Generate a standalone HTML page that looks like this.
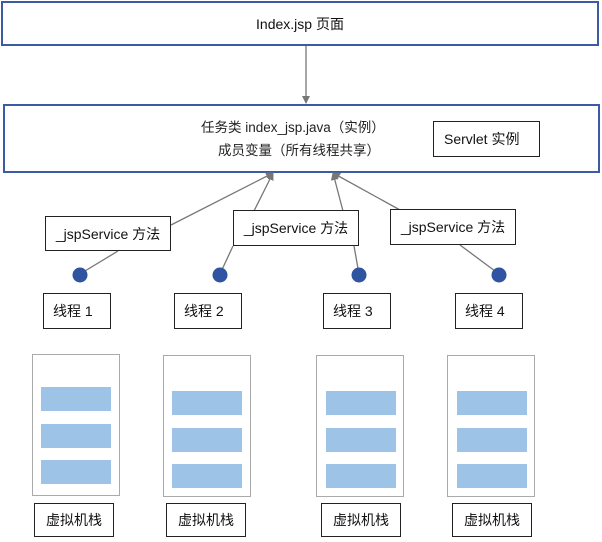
<!DOCTYPE html>
<html><head><meta charset="utf-8"><style>
body{margin:0;width:602px;height:542px;background:#fff;position:relative;overflow:hidden;font-family:"Liberation Sans","Noto Sans CJK SC",sans-serif;font-size:14px;color:#111}
.b{position:absolute;box-sizing:border-box;border:1.5px solid #222;background:#fff;display:flex;align-items:center;justify-content:center}
.l{justify-content:flex-start;padding-left:9px}
.blue{border:2px solid #3d5aa5}
.s{position:absolute;box-sizing:border-box;border:1.5px solid #aaa;background:#fff}
.bar{position:absolute;background:#9dc3e6}
svg{position:absolute;left:0;top:0}
</style></head><body>
<div class="b blue" style="left:1px;top:1px;width:598px;height:45px">Index.jsp 页面</div>
<div class="b blue" style="left:3px;top:104px;width:597px;height:69px"></div>
<div style="position:absolute;left:201px;top:116px;font-size:13.5px;color:#222">任务类 index_jsp.java（实例）</div>
<div style="position:absolute;left:218px;top:139px;font-size:13.5px;color:#222">成员变量（所有线程共享）</div>
<div class="b" style="left:433px;top:121px;width:107px;height:36px;justify-content:flex-start;padding-left:10px">Servlet 实例</div>

<svg width="602" height="542">
<defs><marker id="a" markerWidth="8" markerHeight="8" refX="7" refY="4" orient="auto" markerUnits="userSpaceOnUse"><path d="M0,0L8,4L0,8z" fill="#777"/></marker></defs>
<g stroke="#777" stroke-width="1.3" fill="none">
<line x1="306" y1="46" x2="306" y2="103" marker-end="url(#a)"/>
<line x1="171" y1="225" x2="273" y2="173" marker-end="url(#a)"/>
<line x1="254" y1="211" x2="273" y2="173" marker-end="url(#a)"/>
<line x1="343" y1="211" x2="333" y2="173" marker-end="url(#a)"/>
<line x1="400" y1="210" x2="333" y2="173" marker-end="url(#a)"/>
<line x1="118" y1="251" x2="80" y2="274"/>
<line x1="233" y1="246" x2="220" y2="274"/>
<line x1="354" y1="246" x2="359" y2="274"/>
<line x1="460" y1="245" x2="499" y2="274"/>
</g>
<g fill="#2f54a0"><circle cx="80" cy="275" r="7.5"/><circle cx="220" cy="275" r="7.5"/><circle cx="359" cy="275" r="7.5"/><circle cx="499" cy="275" r="7.5"/></g>
</svg>

<div class="b" style="left:45px;top:216px;width:126px;height:35px">_jspService 方法</div>
<div class="b" style="left:233px;top:210px;width:126px;height:36px">_jspService 方法</div>
<div class="b" style="left:390px;top:209px;width:126px;height:36px">_jspService 方法</div>

<div class="b l" style="left:43px;top:293px;width:68px;height:36px">线程 1</div>
<div class="b l" style="left:174px;top:293px;width:68px;height:36px">线程 2</div>
<div class="b l" style="left:323px;top:293px;width:68px;height:36px">线程 3</div>
<div class="b l" style="left:455px;top:293px;width:68px;height:36px">线程 4</div>

<div class="s" style="left:32px;top:354px;width:88px;height:142px"></div>
<div class="s" style="left:163px;top:355px;width:88px;height:142px"></div>
<div class="s" style="left:316px;top:355px;width:88px;height:142px"></div>
<div class="s" style="left:447px;top:355px;width:88px;height:142px"></div>

<div class="bar" style="left:41px;top:387px;width:70px;height:24px"></div>
<div class="bar" style="left:41px;top:424px;width:70px;height:24px"></div>
<div class="bar" style="left:41px;top:460px;width:70px;height:24px"></div>
<div class="bar" style="left:172px;top:391px;width:70px;height:24px"></div>
<div class="bar" style="left:172px;top:428px;width:70px;height:24px"></div>
<div class="bar" style="left:172px;top:464px;width:70px;height:24px"></div>
<div class="bar" style="left:326px;top:391px;width:70px;height:24px"></div>
<div class="bar" style="left:326px;top:428px;width:70px;height:24px"></div>
<div class="bar" style="left:326px;top:464px;width:70px;height:24px"></div>
<div class="bar" style="left:457px;top:391px;width:70px;height:24px"></div>
<div class="bar" style="left:457px;top:428px;width:70px;height:24px"></div>
<div class="bar" style="left:457px;top:464px;width:70px;height:24px"></div>

<div class="b" style="left:34px;top:503px;width:80px;height:34px">虚拟机栈</div>
<div class="b" style="left:166px;top:503px;width:80px;height:34px">虚拟机栈</div>
<div class="b" style="left:321px;top:503px;width:80px;height:34px">虚拟机栈</div>
<div class="b" style="left:452px;top:503px;width:80px;height:34px">虚拟机栈</div>
</body></html>
